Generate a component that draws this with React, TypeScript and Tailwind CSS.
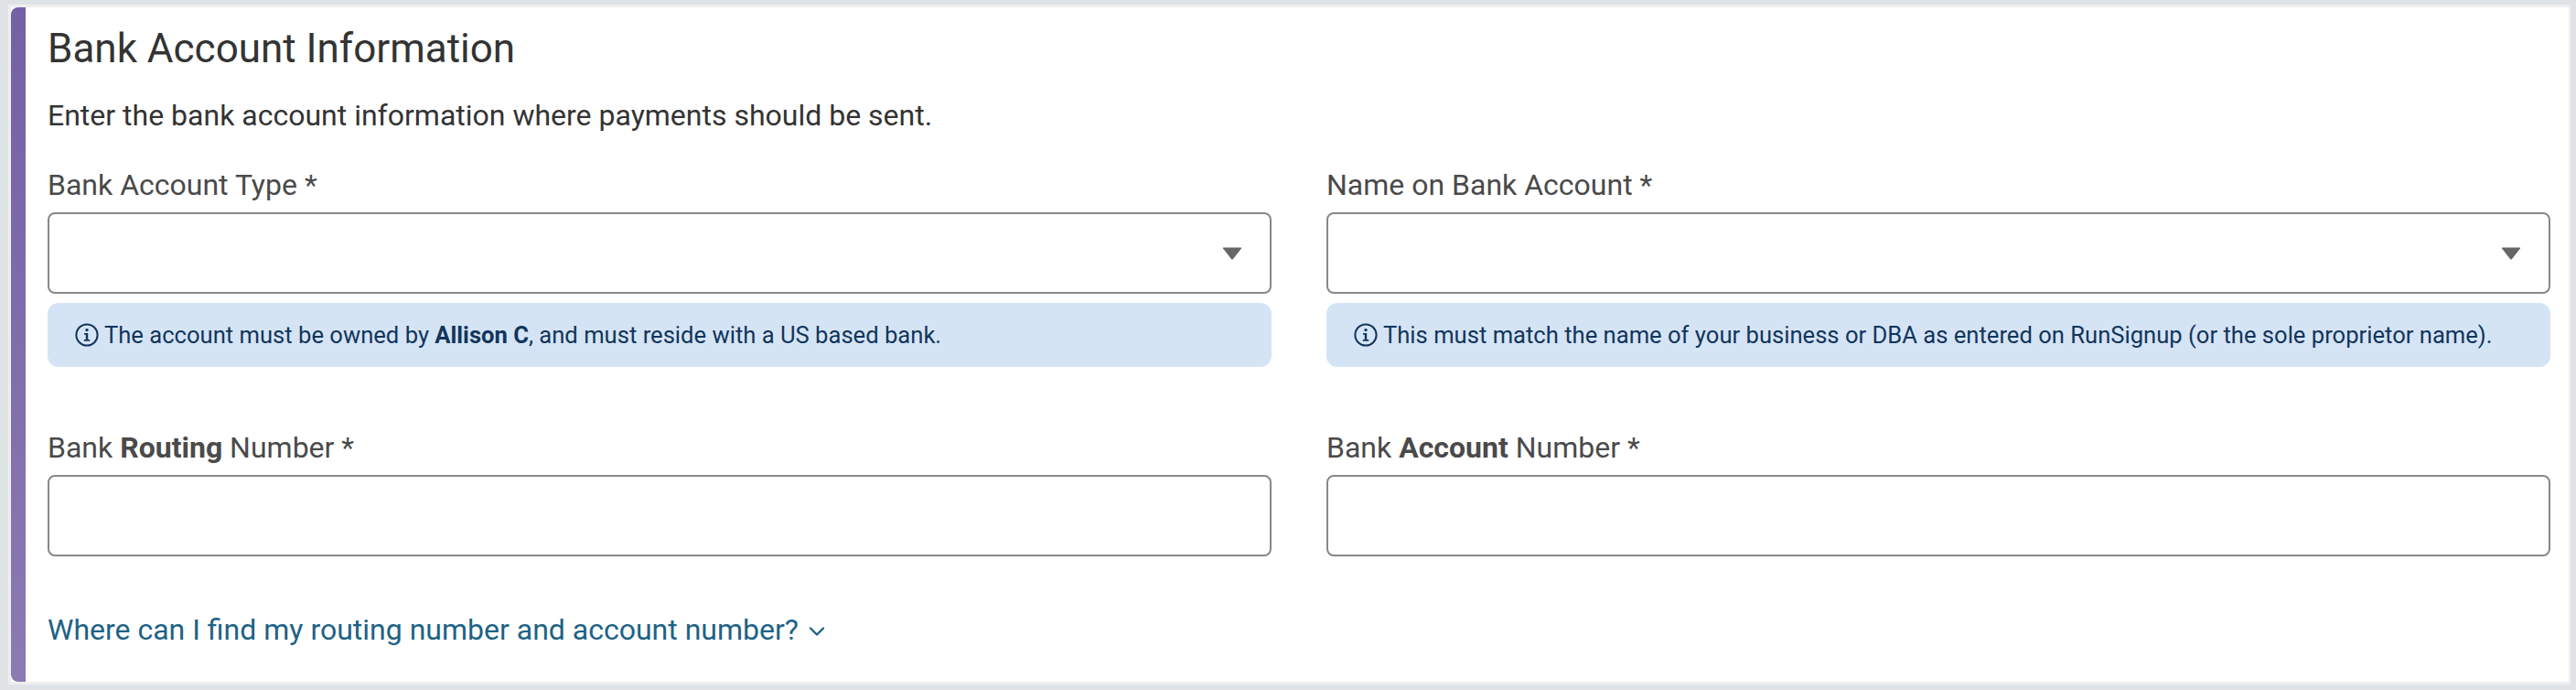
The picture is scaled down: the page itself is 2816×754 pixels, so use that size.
import { ChevronDown } from "lucide-react";

const font = "font-['Roboto',sans-serif]";

const InfoIcon = () => (
  <svg className="mr-[6px] h-[26px] w-[26px] shrink-0" viewBox="0 0 26 26" fill="none">
    <circle cx="13" cy="13" r="11.6" stroke="#12355b" strokeWidth="2" />
    <circle cx="13" cy="7.6" r="1.7" fill="#12355b" />
    <path d="M10 11h4.2v7H16.2v1.8H9.8V18h2v-5.2H10z" fill="#12355b" />
  </svg>
);

const Caret = () => (
  <svg className="h-[14px] w-[22px]" viewBox="0 0 22 14">
    <path d="M1 1.5Q0.3 0.5 1.5 0.5H20.5Q21.7 0.5 21 1.5L12 13Q11 14 10 13Z" fill="#666666" />
  </svg>
);

const FieldLabel = ({ children }: { children: React.ReactNode }) => (
  <label className="mb-[6px] block text-[32px] leading-[48px] text-[#4a4a4a]">{children}</label>
);

const SelectField = ({ label, help }: { label: string; help: React.ReactNode }) => (
  <div className="min-w-0">
    <FieldLabel>{label}</FieldLabel>
    <div className="flex h-[89px] items-center justify-end rounded-[8px] border-2 border-[#888888] bg-white pr-[30px]">
      <Caret />
    </div>
    <div className="mt-[10px] flex h-[70px] items-center rounded-[12px] bg-[#d5e4f5] pl-[30px] text-[25.6px] text-[#12355b]">
      <InfoIcon />
      <span>{help}</span>
    </div>
  </div>
);

const TextField = ({ label }: { label: React.ReactNode }) => (
  <div className="min-w-0">
    <FieldLabel>{label}</FieldLabel>
    <input
      type="text"
      className="block h-[89px] w-full rounded-[8px] border-2 border-[#888888] bg-white px-[24px] text-[32px] outline-none"
    />
  </div>
);

export default function App() {
  return (
    <div className={`${font} h-[754px] w-[2816px] overflow-hidden bg-[#dfe3e6] pl-[9px] pr-[6px] pt-[5px]`}>
      <div className="flex h-[743px] border-y-[3px] border-l-[3px] border-r-2 border-[#eeeeee] bg-white">
        <div className="w-[16px] shrink-0 rounded-l-[8px] bg-gradient-to-b from-[#7460a5] to-[#8c7ab3]" />
        <div className="min-w-0 flex-1 pl-[24px] pr-[20px] pt-[18px]">
          <h2 className="text-[44px] leading-[54px] text-[#333333]">Bank Account Information</h2>
          <p className="mt-[22px] text-[32px] leading-[48px] text-[#333333]">
            Enter the bank account information where payments should be sent.
          </p>
          <div className="mt-[28px] grid grid-cols-2 gap-x-[60px]">
            <SelectField
              label="Bank Account Type *"
              help={
                <>
                  The account must be owned by <b>Allison C</b>, and must reside with a US based bank.
                </>
              }
            />
            <SelectField
              label="Name on Bank Account *"
              help="This must match the name of your business or DBA as entered on RunSignup (or the sole proprietor name)."
            />
          </div>
          <div className="mt-[64px] grid grid-cols-2 gap-x-[60px]">
            <TextField
              label={
                <>
                  Bank <b>Routing</b> Number *
                </>
              }
            />
            <TextField
              label={
                <>
                  Bank <b>Account</b> Number *
                </>
              }
            />
          </div>
          <a className="mt-[56px] flex items-center text-[32px] leading-[48px] text-[#1d6285]" href="#">
            Where can I find my routing number and account number?
            <ChevronDown className="ml-[6px] mt-[4px] h-[28px] w-[28px]" strokeWidth={2} />
          </a>
        </div>
      </div>
    </div>
  );
}
